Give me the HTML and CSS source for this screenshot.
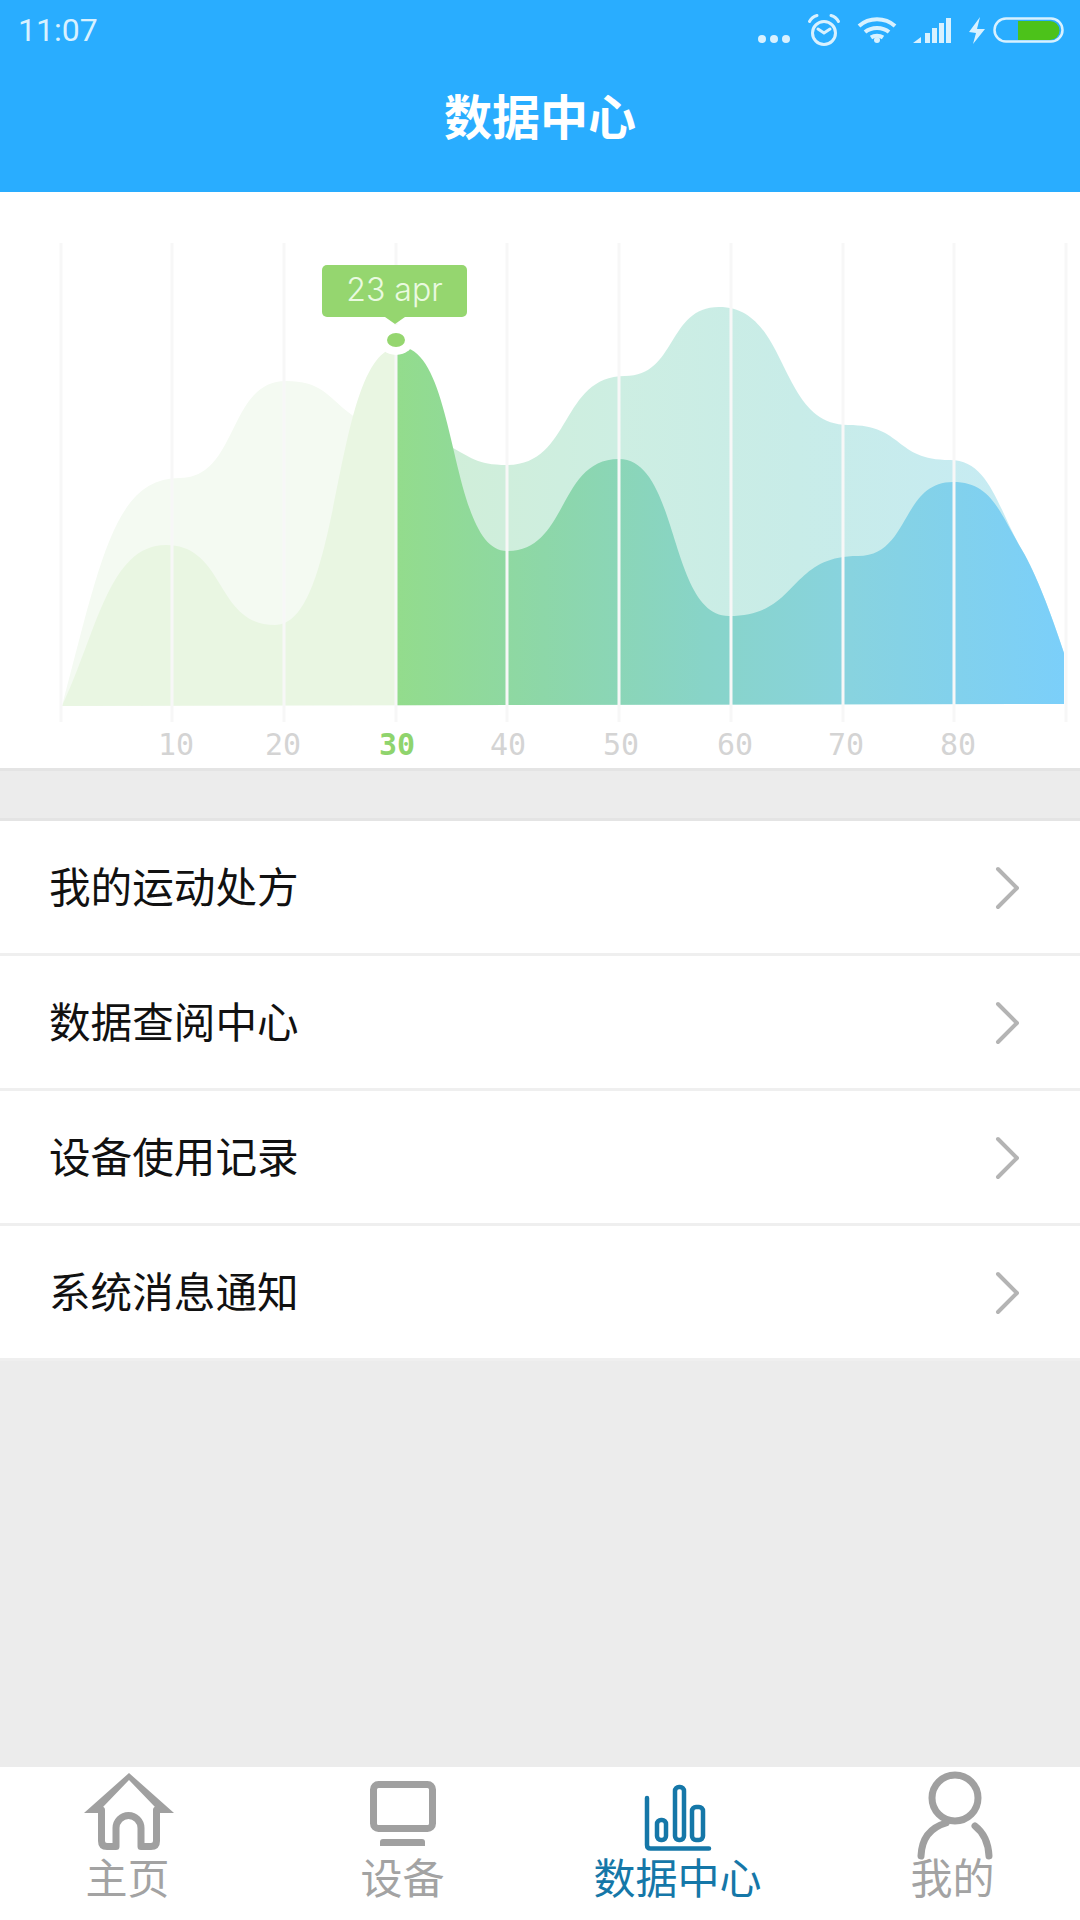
FILE: index.html
```html
<!DOCTYPE html>
<html lang="zh-CN">
<head>
  <meta charset="UTF-8">
  <title>数据中心</title>
  <meta name="viewport" content="width=device-width, initial-scale=1.0">
  <link rel="stylesheet" href="styles.css">
</head>
<body>
  <div class="app">
    <header class="header">
      <div class="status-bar">
        <span class="time">11:07</span>
        <svg class="status-icons" viewBox="740 0 340 60" width="340" height="60">
          <circle cx="762" cy="39" r="4"/><circle cx="774" cy="39" r="4"/><circle cx="786" cy="39" r="4"/>
          <g class="line">
            <circle cx="824" cy="33" r="11.5"/>
            <path d="M818 29l6 4 6-4"/>
            <path d="M809.500 21.500c1.500-3 4-5 7.500-6M838.500 21.500c-1.500-3-4-5-7.500-6"/>
          </g>
          <g class="line wifi">
            <path d="M859 26c10-9 26-9 36 0M865 32c6.500-5.500 17.500-5.500 24 0M871 37.500c3.500-2.500 8.500-2.500 12 0"/>
          </g>
          <circle cx="877" cy="40" r="3"/>
          <path d="M913 43l8-6v6zM925 33h5v10h-5zM932 28h5v15h-5zM939 23h5v20h-5zM946 18h5v25h-5z"/>
          <path d="M980 17l-11 15 7 1-3 11 12-15-8 0z"/>
          <rect class="line battery" x="994.500" y="18.500" width="68" height="23" rx="11.500"/>
          <path class="charge" d="M1018 21h32a9.500 9.500 0 0 1 0 19h-32z"/>
        </svg>
      </div>
      <h1 class="title">数据中心</h1>
    </header>

    <section class="chart">
      <svg class="chart-svg" viewBox="0 192 1080 576" width="1080" height="576">
        <defs>
          <linearGradient id="backFill" gradientUnits="userSpaceOnUse" x1="396" y1="0" x2="1064" y2="0">
            <stop offset="0" stop-color="#d1eed6"/>
            <stop offset="0.33" stop-color="#cdeee2"/>
            <stop offset="0.6" stop-color="#c8ece8"/>
            <stop offset="1" stop-color="#c6ebf6"/>
          </linearGradient>
          <linearGradient id="frontFill" gradientUnits="userSpaceOnUse" x1="396" y1="0" x2="1064" y2="0">
            <stop offset="0" stop-color="#93dc8c"/>
            <stop offset="0.22" stop-color="#8dd7a8"/>
            <stop offset="0.46" stop-color="#88d4c8"/>
            <stop offset="0.68" stop-color="#88d3df"/>
            <stop offset="1" stop-color="#7bcffa"/>
          </linearGradient>
          <clipPath id="past"><rect x="0" y="192" width="396" height="576"/></clipPath>
          <clipPath id="future"><rect x="396" y="192" width="684" height="576"/></clipPath>
        </defs>

        <path class="area" data-curve="back" clip-path="url(#past)" fill="#f4faf2"/>
        <path class="area" data-curve="front" clip-path="url(#past)" fill="#e9f6e2"/>
        <path class="area" data-curve="back" clip-path="url(#future)" fill="url(#backFill)"/>
        <path class="area" data-curve="front" clip-path="url(#future)" fill="url(#frontFill)"/>

        <g class="grid">
          <line x1="61" y1="243" x2="61" y2="722"/>
          <line x1="172" y1="243" x2="172" y2="722"/>
          <line x1="284" y1="243" x2="284" y2="722"/>
          <line x1="396" y1="243" x2="396" y2="722"/>
          <line x1="507" y1="243" x2="507" y2="722"/>
          <line x1="619" y1="243" x2="619" y2="722"/>
          <line x1="731" y1="243" x2="731" y2="722"/>
          <line x1="843" y1="243" x2="843" y2="722"/>
          <line x1="954" y1="243" x2="954" y2="722"/>
          <line x1="1066" y1="243" x2="1066" y2="722"/>
        </g>

        <ellipse cx="396" cy="340" rx="18" ry="15" fill="#fff"/>
        <ellipse cx="396" cy="340" rx="9" ry="7" fill="#95d66f"/>

        <g class="axis">
          <text x="176" y="755">10</text>
          <text x="283" y="755">20</text>
          <text class="axis-active" x="397" y="755">30</text>
          <text x="508" y="755">40</text>
          <text x="621" y="755">50</text>
          <text x="735" y="755">60</text>
          <text x="846" y="755">70</text>
          <text x="958" y="755">80</text>
        </g>
      </svg>
      <div class="tooltip">23 apr</div>
    </section>

    <ul class="menu">
      <li class="menu-item">
        <span class="menu-label">我的运动处方</span>
        <svg class="chevron" viewBox="0 0 26 44" width="26" height="44"><path d="M3 3l19 19L3 41"/></svg>
      </li>
      <li class="menu-item">
        <span class="menu-label">数据查阅中心</span>
        <svg class="chevron" viewBox="0 0 26 44" width="26" height="44"><path d="M3 3l19 19L3 41"/></svg>
      </li>
      <li class="menu-item">
        <span class="menu-label">设备使用记录</span>
        <svg class="chevron" viewBox="0 0 26 44" width="26" height="44"><path d="M3 3l19 19L3 41"/></svg>
      </li>
      <li class="menu-item">
        <span class="menu-label">系统消息通知</span>
        <svg class="chevron" viewBox="0 0 26 44" width="26" height="44"><path d="M3 3l19 19L3 41"/></svg>
      </li>
    </ul>

    <nav class="tabbar">
      <div class="tab">
        <svg class="tab-icon" viewBox="0 0 100 88" width="100" height="88">
          <path class="solid" d="M51 3l45 40H77v-6L51 10 25 37v6H6z"/>
          <path d="M23.500 40v31q0 5.500 5.500 5.500h9V58a12.500 12.500 0 0 1 25 0v18.500h10q5.500 0 5.500-5.500V40"/>
        </svg>
        <span class="tab-label">主页</span>
      </div>
      <div class="tab">
        <svg class="tab-icon" viewBox="0 0 100 88" width="100" height="88">
          <rect x="20.500" y="14.500" width="59" height="44" rx="5"/>
          <path class="solid" d="M27 76v-4q0-3 3-3h39q3 0 3 3v4z"/>
        </svg>
        <span class="tab-label">设备</span>
      </div>
      <div class="tab tab-active">
        <svg class="tab-icon" viewBox="0 0 100 88" width="100" height="88">
          <path class="thin" d="M19 28v47q0 3.500 3.500 3.500H81"/>
          <rect class="thin" x="29" y="50" width="9" height="20" rx="4"/>
          <rect class="thin" x="47" y="17" width="9" height="53" rx="4"/>
          <rect class="thin" x="64" y="37" width="11" height="33" rx="4"/>
        </svg>
        <span class="tab-label">数据中心</span>
      </div>
      <div class="tab">
        <svg class="tab-icon" viewBox="0 0 100 88" width="100" height="88">
          <circle cx="52" cy="28" r="23"/>
          <path d="M43 53Q19 60 18 86M72 56Q85 66 86 86"/>
        </svg>
        <span class="tab-label">我的</span>
      </div>
    </nav>
  </div>

  <script src="script.js"></script>
</body>
</html>
```

FILE: styles.css
```css
* {
  box-sizing: border-box;
}
body {
  margin: 0;
  background: #ececec;
  font-family: "Noto Sans CJK SC", "Noto Sans", sans-serif;
}
.app {
  display: flex;
  flex-direction: column;
  width: 1080px;
  height: 1920px;
  overflow: hidden;
}

/* header */
.header {
  height: 192px;
  background: #29adff;
}
.status-bar {
  display: flex;
  justify-content: space-between;
  align-items: center;
  height: 60px;
  padding-left: 18px;
}
.time {
  font-family: Roboto, sans-serif;
  font-size: 32px;
  color: #d8f1ff;
}
.status-icons {
  display: block;
  fill: #d8f1ff;
}
.status-icons .line {
  fill: none;
  stroke: #d8f1ff;
  stroke-width: 3;
  stroke-linecap: round;
}
.status-icons .wifi {
  stroke-width: 4;
  stroke-linecap: butt;
}
.status-icons .battery {
  stroke-width: 2.5;
}
.status-icons .charge {
  fill: #4cc21a;
}
.title {
  margin: 0;
  font-size: 48px;
  font-weight: 700;
  line-height: 108px;
  text-align: center;
  color: #fff;
}

/* chart */
.chart {
  position: relative;
  height: 579px;
  background: #fff;
  border-bottom: 3px solid #e4e4e4;
}
.chart-svg {
  display: block;
}
.grid line {
  stroke: #f7f7f7;
  stroke-width: 3;
}
.axis text {
  font-family: "DejaVu Sans Mono", monospace;
  font-size: 30px;
  text-anchor: middle;
  fill: #d4d4d4;
}
.axis .axis-active {
  font-weight: 700;
  fill: #8fd46d;
}
.tooltip {
  position: absolute;
  left: 322px;
  top: 73px;
  width: 145px;
  height: 52px;
  background: #95d66f;
  border-radius: 5px;
  font-family: Inter, sans-serif;
  font-size: 32px;
  font-weight: 300;
  line-height: 50px;
  text-align: center;
  color: #eafae0;
}
.tooltip::after {
  content: "";
  position: absolute;
  left: 63px;
  top: 52px;
  border-left: 10px solid transparent;
  border-right: 10px solid transparent;
  border-top: 7px solid #95d66f;
}

/* menu list */
.menu {
  list-style: none;
  margin: 47px 0 0;
  padding: 0;
  border-top: 3px solid #e4e4e4;
}
.menu-item {
  display: flex;
  justify-content: space-between;
  align-items: center;
  height: 135px;
  padding: 0 59px 0 49px;
  background: #fff;
  border-bottom: 3px solid #efefef;
}
.menu-label {
  margin-bottom: 4px;
  font-size: 41.6px;
  color: #111;
}
.chevron {
  margin-top: 2px;
}
.chevron path {
  fill: none;
  stroke: #b4b4b4;
  stroke-width: 4;
  stroke-linecap: round;
  stroke-linejoin: round;
}

/* bottom tabs */
.tabbar {
  display: grid;
  grid-template-columns: repeat(4, 275px);
  justify-content: center;
  margin-top: auto;
  height: 153px;
  padding-top: 3px;
  background: #fff;
}
.tab {
  display: flex;
  flex-direction: column;
  align-items: center;
  color: #a3a3a3;
}
.tab-label {
  margin-top: -2px;
  font-size: 42px;
  line-height: 40px;
}
.tab-icon {
  display: block;
  overflow: visible;
  fill: none;
  stroke: #a0a0a0;
  stroke-width: 7;
  stroke-linecap: round;
  stroke-linejoin: round;
}
.tab-icon .solid {
  fill: #a0a0a0;
  stroke: none;
}
.tab-active {
  color: #1577a8;
}
.tab-active .tab-icon {
  stroke: #1577a8;
}
.tab-icon .thin {
  stroke-width: 4.5;
}
```

FILE: script.js
```js
// key points of the two curves: [x, y, slope], slope defaults to flat
const curves = {
  back: [[62,706,-3.8],[180,478],[286,381],[348,412,0.8],[451,447,0.5],[507,465],[625,376],[719,307],[848,425],[950,460],[1022,550,1.7],[1064,653,3]],
  front: [[62,706,-2.1],[166,545],[275,625],[400,347],[507,551],[619,459],[729,616],[858,556],[953,482],[1022,550,1.7],[1064,653,3]]
};
const TENSION = 0.55;

function curvePath(pts) {
  let d = `M${pts[0][0]} ${pts[0][1]}`;
  for (let i = 0; i < pts.length - 1; i++) {
    const [x0, y0, s0 = 0] = pts[i];
    const [x1, y1, s1 = 0] = pts[i + 1];
    const dx = x1 - x0;
    // flat ends get a long handle, sloped ends a short one
    const h0 = s0 ? dx / 3 : dx * TENSION;
    const h1 = s1 ? dx / 3 : dx * TENSION;
    d += `C${x0 + h0} ${y0 + s0 * h0} ${x1 - h1} ${y1 - s1 * h1} ${x1} ${y1}`;
  }
  return d + "V704L62 706Z";
}

document.querySelectorAll(".area").forEach(function (el) {
  el.setAttribute("d", curvePath(curves[el.dataset.curve]));
});
```
